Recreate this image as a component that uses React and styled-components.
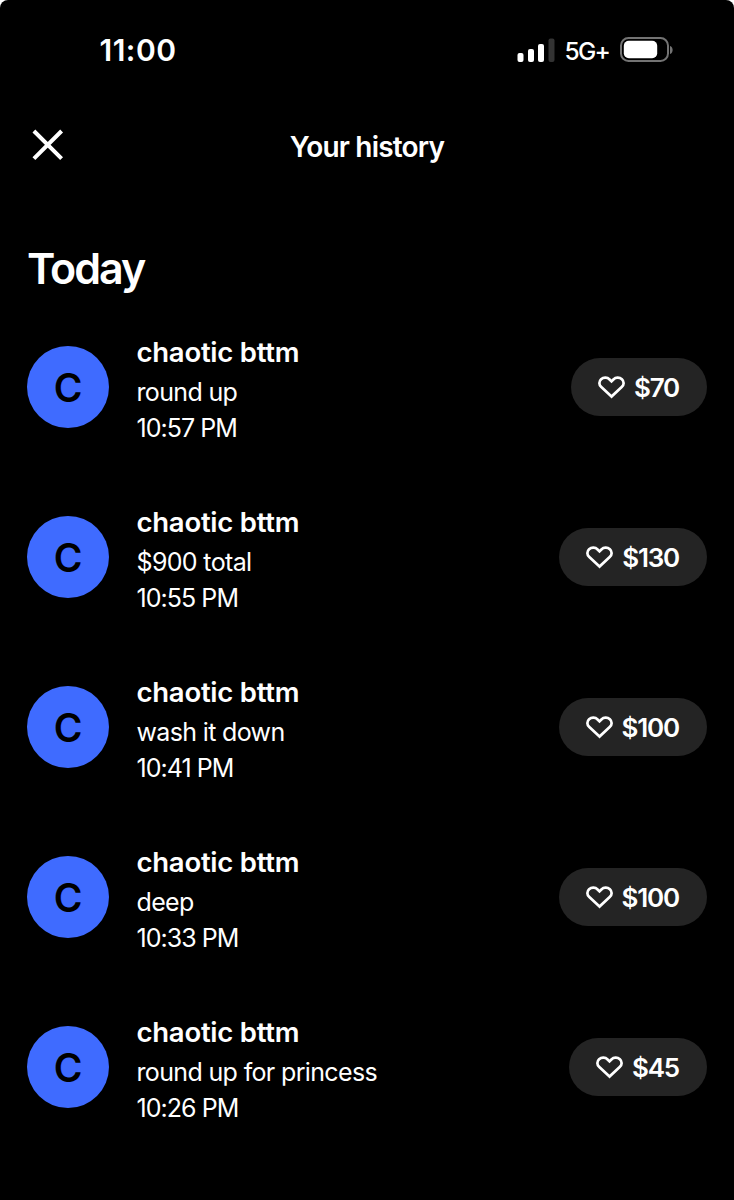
import React from "react";
import styled, { createGlobalStyle } from "styled-components";

const GlobalStyle = createGlobalStyle`
  * {
    box-sizing: border-box;
  }
  body {
    margin: 0;
    background-color: #ffffff;
    font-family: Inter, "Liberation Sans", sans-serif;
  }
`;

const Screen = styled.main`
  display: flex;
  flex-direction: column;
  height: 1200px;
  background-color: #000000;
  border-radius: 8px 8px 0 0;
  color: #ffffff;
  overflow: hidden;
`;

const StatusBar = styled.div`
  display: flex;
  align-items: center;
  justify-content: space-between;
  height: 100px;
  padding: 0 60px 0 99.5px;
`;

const Clock = styled.span`
  font-size: 30px;
  font-weight: 600;
  letter-spacing: 0.5px;
`;

const StatusIcons = styled.div`
  display: flex;
  align-items: center;
  .network {
    margin: 2px 11px 0 10px;
    font-size: 24.5px;
    font-weight: 500;
    letter-spacing: -1.8px;
  }
`;

const Header = styled.header`
  display: grid;
  grid-template-columns: 40px 1fr 40px;
  align-items: center;
  height: 92px;
  padding: 0 28px;
`;

const CloseButton = styled.button`
  display: flex;
  padding: 0;
  border: none;
  background: none;
  color: inherit;
  cursor: pointer;
`;

const Title = styled.h1`
  margin: 2px 0 0;
  font-size: 28px;
  font-weight: 600;
  letter-spacing: -0.8px;
  text-align: center;
`;

const DayHeading = styled.h2`
  height: 110px;
  margin: 0;
  padding: 0 27px;
  font-size: 43px;
  font-weight: 600;
  line-height: 152px;
  letter-spacing: -2px;
`;

const List = styled.ul`
  margin: 0;
  padding: 0;
  list-style: none;
`;

const Row = styled.li`
  display: flex;
  align-items: center;
  height: 170px;
  padding: 0 27px;
`;

const Avatar = styled.div`
  display: flex;
  flex: none;
  align-items: center;
  justify-content: center;
  width: 82px;
  height: 82px;
  border-radius: 50%;
  background-color: #3f6bff;
  color: #000000;
  font-size: 39px;
  font-weight: 600;
`;

const Details = styled.div`
  flex: 1;
  margin-left: 27.5px;
  padding-top: 3px;
  .name {
    font-size: 27.5px;
    font-weight: 600;
    line-height: 38px;
    letter-spacing: -0.25px;
  }
  .note,
  .time {
    font-size: 25px;
    line-height: 36px;
    letter-spacing: -0.65px;
  }
  .note {
    margin-top: 3px;
  }
  .time {
    margin-bottom: -1px;
    letter-spacing: -0.95px;
  }
`;

const LikeButton = styled.button`
  display: flex;
  align-items: center;
  gap: 9px;
  height: 58px;
  padding: 0 28px 0 27px;
  border: none;
  border-radius: 29px;
  background-color: #242424;
  color: #ffffff;
  font-family: inherit;
  font-size: 26px;
  font-weight: 600;
  letter-spacing: -1.2px;
  cursor: pointer;
`;

const SignalIcon = () => (
  <svg width="38" height="25" viewBox="0 0 38 25" fill="#ffffff">
    <rect x="0.5" y="15" width="6" height="9" rx="2" />
    <rect x="11" y="11" width="6" height="13" rx="2" />
    <rect x="21" y="6" width="6" height="18" rx="2" />
    <rect x="31.5" y="0.5" width="6" height="23.5" rx="2" fill="#333333" />
  </svg>
);

const BatteryIcon = () => (
  <svg width="54" height="26" viewBox="0 0 54 26">
    <rect
      x="1"
      y="1"
      width="47"
      height="23"
      rx="7.5"
      fill="none"
      stroke="#737373"
      strokeWidth="2"
    />
    <rect x="3.8" y="3.8" width="33.4" height="17.4" rx="5" fill="#ffffff" />
    <path d="M50 9c3.5.7 3.5 7.3 0 8z" fill="#737373" />
  </svg>
);

const CloseIcon = () => (
  <svg width="40" height="40" viewBox="0 0 40 40">
    <path
      d="M5.9 5L33.6 32.7M33.6 5L5.9 32.7"
      stroke="#ffffff"
      strokeWidth="4"
    />
  </svg>
);

const HeartIcon = () => (
  <svg width="27" height="23" viewBox="0 0 27 23">
    <path
      d="M13.5 20.6L3.3 11.1C.8 8.8.8 5.5 3.1 3.3C5.5 1.1 9.3 1.2 11.6 3.5L13.5 5.4L15.4 3.5C17.7 1.2 21.5 1.1 23.9 3.3C26.2 5.5 26.2 8.8 23.7 11.1Z"
      fill="none"
      stroke="#ffffff"
      strokeWidth="2.7"
    />
  </svg>
);

const history = [
  { note: "round up", time: "10:57 PM", amount: 70 },
  { note: "$900 total", time: "10:55 PM", amount: 130 },
  { note: "wash it down", time: "10:41 PM", amount: 100 },
  { note: "deep", time: "10:33 PM", amount: 100 },
  { note: "round up for princess", time: "10:26 PM", amount: 45 },
];

function HistoryRow({ note, time, amount }) {
  return (
    <Row>
      <Avatar>C</Avatar>
      <Details>
        <div className="name">chaotic bttm</div>
        <div className="note">{note}</div>
        <div className="time">{time}</div>
      </Details>
      <LikeButton>
        <HeartIcon />
        <span>${amount}</span>
      </LikeButton>
    </Row>
  );
}

function App() {
  return (
    <>
      <GlobalStyle />
      <Screen>
        <StatusBar>
          <Clock>11:00</Clock>
          <StatusIcons>
            <SignalIcon />
            <span className="network">5G+</span>
            <BatteryIcon />
          </StatusIcons>
        </StatusBar>
        <Header>
          <CloseButton aria-label="Close">
            <CloseIcon />
          </CloseButton>
          <Title>Your history</Title>
        </Header>
        <DayHeading>Today</DayHeading>
        <List>
          {history.map((item) => (
            <HistoryRow key={item.time} {...item} />
          ))}
        </List>
      </Screen>
    </>
  );
}

export default App;
